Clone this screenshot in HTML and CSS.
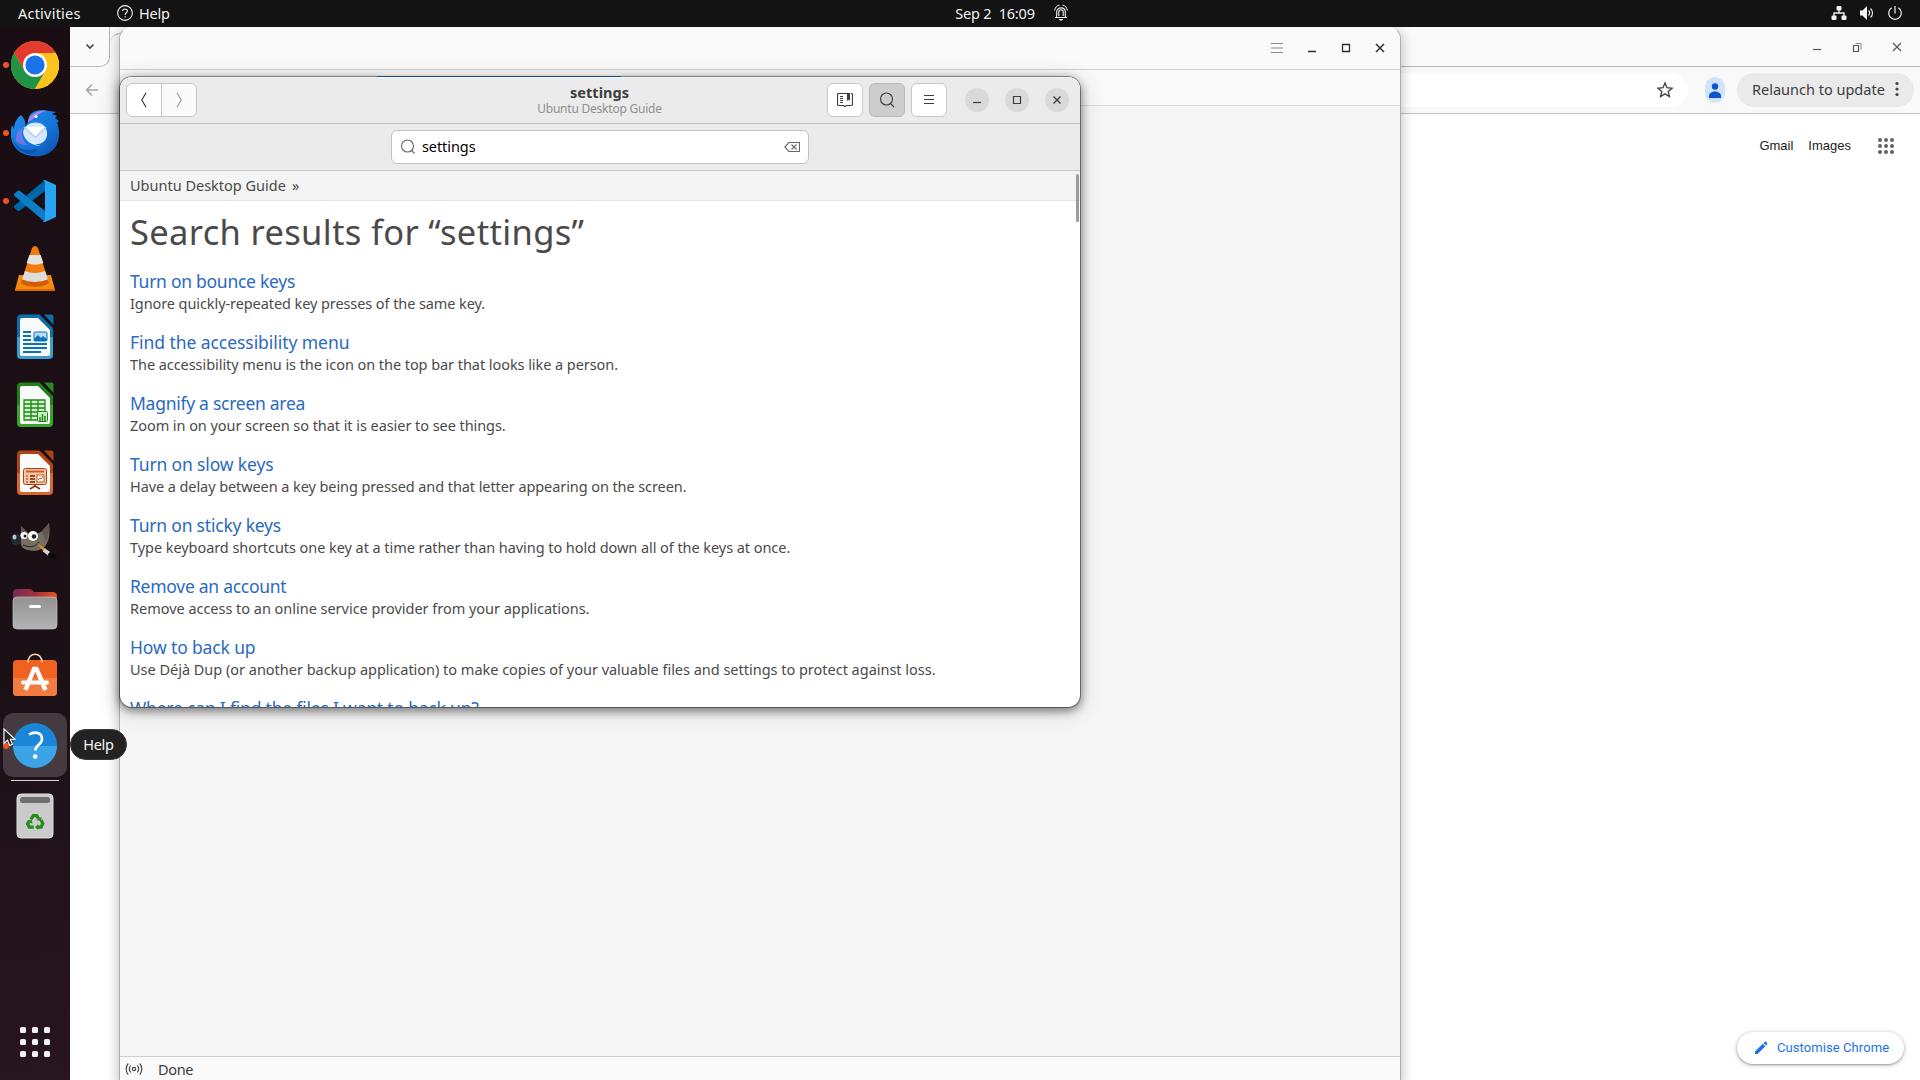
FILE: index.html
```html
<!DOCTYPE html>
<html lang="en">
<head>
<meta charset="utf-8">
<title>Help</title>
<link rel="stylesheet" href="styles.css">
</head>
<body>
<div class="screen">
  <header class="topbar">
    <div class="topbar-left">
      <span class="activities">Activities</span>
      <svg width="16" height="16" viewBox="0 0 16 16" fill="none" stroke="#f2f2f2"><circle cx="8" cy="8" r="7.4" stroke-width="1.1"/><path d="M5.7 6.1C5.7 3.3 10.4 3.3 10.4 6c0 1.8-2.3 1.8-2.3 4M8.1 11.2v1.4" stroke-width="1.1"/></svg>
      <span class="app-name">Help</span>
    </div>
    <div class="topbar-clock">
      <span class="clock">Sep 2&nbsp; 16:09</span>
      <svg width="16" height="18" viewBox="0 0 16 18" fill="none" stroke="#f2f2f2"><path d="M2 13.5h12M3.7 13V8C3.7 2.5 12.3 2.5 12.3 8v5M5.8 12V8C5.8 5 10.2 5 10.2 8v4" stroke-width="1.1"/><path d="M1.700 6.500C2 3 4.500 1.300 6.500 1.200M14.300 6.500C14 3 11.500 1.300 9.500 1.200"/><path d="M6 15h4c-.3 2.200-3.700 2.200-4 0z" fill="#f2f2f2" stroke="none"/></svg>
    </div>
    <div class="topbar-status">
      <svg width="16" height="16" viewBox="0 0 16 16" fill="#f2f2f2"><rect x="5.500" y="1" width="5" height="4.500" rx="1"/><rect x="0.500" y="10.500" width="5" height="4.500" rx="1"/><rect x="10.500" y="10.500" width="5" height="4.500" rx="1"/><path d="M8 5v3M3 11V8h10v3" fill="none" stroke="#f2f2f2" stroke-width="1.300"/></svg>
      <svg width="16" height="16" viewBox="0 0 16 16" fill="#f2f2f2"><path d="M1 5.500h2.500L8 1v14l-4.500-4.500H1z"/><path d="M9.500 5.500c1.500 1.500 1.500 3.500 0 5M11.500 3.500c2.700 2.500 2.700 6.500 0 9" fill="none" stroke="#f2f2f2" stroke-width="1.100"/></svg>
      <svg width="16" height="16" viewBox="0 0 16 16" fill="none" stroke="#f2f2f2" stroke-width="1.200"><path d="M8 1v7.500M4.600 2.800a6.300 6.300 0 1 0 6.800 0"/></svg>
    </div>
  </header>

  <nav class="dock">
    <div class="dock-item running"><svg width="48" height="48" viewBox="0 0 48 48"><circle cx="24" cy="24" r="24" fill="#fbc116"/><path d="M3.200 12A24 24 0 0 1 44.800 12L24 12 13.600 30z" fill="#e33b2e"/><path d="M3.200 12A24 24 0 0 0 24 48L34.400 30 13.600 30z" fill="#229342"/><path d="M24 48L34.400 30 24 12H44.800A24 24 0 0 1 24 48z" fill="#fcc31e"/><circle cx="24" cy="24" r="12" fill="#fff"/><circle cx="24" cy="24" r="9.600" fill="#1a73e8"/></svg></div>
    <div class="dock-item running"><svg width="48" height="48" viewBox="0 0 48 48"><defs><linearGradient id="tb" x1="0" y1="0" x2="1" y2="1"><stop offset="0" stop-color="#258ff0"/><stop offset=".6" stop-color="#1373d9"/><stop offset="1" stop-color="#0b4aa5"/></linearGradient></defs><path d="M10 6c4 4 5 8 4 12l3-5C17 5 22 1 32 1l13 2-4 2 5 2-2 2 4 3-2 2c3 6 3 16-1 23-5 8-13 11-22 10C10 47 1 38 0 28c-.5-4 0-8 1-12l2 4c0-6 3-11 7-14z" fill="url(#tb)"/><path d="M17 13c2-8 10-12 19-11-9 1-11 7-19 11z" fill="#ae8bea"/><circle cx="25" cy="7.500" r="1.500" fill="#fff"/><path d="M1 27c3 13 14 16 26 13l-4 5C10 46 2 37 1 27z" fill="#0b55b5"/><path d="M5 32c0-8 2-11 7-14-3 8 0 14 5 18-5 0-9-1-12-4z" fill="#6b78e5"/><path d="M12 23c3-12 22-13 24 0 1 9-6 13-13 12l7 2c-8 0-17-5-18-14z" fill="#d7eafd"/><path d="M13 18l10 9c1 .8 2 .8 3 0l9-9" fill="#fff" stroke="#a6c8ee" stroke-width="1.200"/></svg></div>
    <div class="dock-item running"><svg width="44" height="44" viewBox="0 0 44 44"><path d="M32 1v11L7 31.500c-1 .8-2 .7-2.600 0L1.500 29c-.7-.8-.7-1.700 0-2.500z" fill="#0065a9"/><path d="M32 43V32L7 12c-1-.8-2-.7-2.600 0l-2.900 2.600c-.7.8-.7 1.700 0 2.500z" fill="#0c7dc6"/><path d="M32 1l11 5v32l-11 5c-1 .2-2 0-2-1 1 .5 2 0 2-1.500v-37C32 2 31 1.500 30 2c.5-.8 1-1.200 2-1z" fill="#27a5f2"/></svg></div>
    <div class="dock-item raised"><svg width="42" height="48" viewBox="0 0 42 48"><path d="M5 31h32l4 15H1z" fill="#f58a10"/><path d="M1 45h40v2H1z" fill="#e06500"/><path d="M18 4q3-4 6 0l11 35q-14 8-28 0z" fill="#f27c0c"/><path d="M15.400 11h11.200l2.800 8q-8.400 3.500-16.800 0z" fill="#e4e4e4"/><path d="M11 27q10 4 20 0l3 8.500q-13 5-26 0z" fill="#ddd"/><path d="M8 35.500q13 5 26 0l1 4q-14 7-28 0z" fill="#d35d05"/></svg></div>
    <div class="dock-item"><svg width="38" height="46" viewBox="0 0 38 46"><defs><linearGradient id="wr" x2="0" y2="1"><stop offset=".5" stop-color="#0b6fa9"/><stop offset=".5" stop-color="#3a9ed1"/></linearGradient></defs><path d="M5 .5h18.500L37 14v27a4 4 0 0 1-4 4H5a4 4 0 0 1-4-4V5A4 4 0 0 1 5 .5z" fill="url(#wr)"/><path d="M4 6q0-2 2-2h16l12 12v24q0 2-2 2H6q-2 0-2-2z" fill="#fbfbfb"/><path d="M28 .5h7.500q2 0 2 2V11z" fill="#0b6fa9"/><path d="M7 18h8M7 22h8M7 26h8M7 30h24M7 34h24M7 38h18" stroke="#0a73b5" stroke-width="2"/><rect x="18" y="18" width="13" height="9" rx="1" fill="#b5defa" stroke="#0a73b5"/><path d="M18 27v-2l4-4 3 3 2-2 4 3v2z" fill="#0a73b5"/></svg></div>
    <div class="dock-item"><svg width="38" height="46" viewBox="0 0 38 46"><defs><linearGradient id="ca" x2="0" y2="1"><stop offset=".5" stop-color="#1f8315"/><stop offset=".5" stop-color="#37a726"/></linearGradient></defs><path d="M5 .5h18.500L37 14v27a4 4 0 0 1-4 4H5a4 4 0 0 1-4-4V5A4 4 0 0 1 5 .5z" fill="url(#ca)"/><path d="M4 6q0-2 2-2h16l12 12v24q0 2-2 2H6q-2 0-2-2z" fill="#fbfbfb"/><path d="M28 .5h7.500q2 0 2 2V11z" fill="#268c17"/><path d="M8 18h21v20H8zM8 22h21M8 26h21M8 30h21M8 34h21M15 18v20M22 18v20" fill="#cdf3c7" stroke="#20871a" stroke-width="1.300"/><rect x="21.500" y="29.500" width="10" height="10" rx="1" fill="#c9f2c2" stroke="#20871a"/><path d="M24 39v-4M26.500 39v-7M29 39v-5" stroke="#20871a" stroke-width="1.500"/></svg></div>
    <div class="dock-item"><svg width="38" height="46" viewBox="0 0 38 46"><defs><linearGradient id="im" x2="0" y2="1"><stop offset=".5" stop-color="#b14511"/><stop offset=".5" stop-color="#d9662f"/></linearGradient></defs><path d="M5 .5h18.500L37 14v27a4 4 0 0 1-4 4H5a4 4 0 0 1-4-4V5A4 4 0 0 1 5 .5z" fill="url(#im)"/><path d="M4 6q0-2 2-2h16l12 12v24q0 2-2 2H6q-2 0-2-2z" fill="#fbfbfb"/><path d="M28 .5h7.500q2 0 2 2V11z" fill="#ab4413"/><rect x="7.500" y="18.500" width="23" height="16" rx="2" fill="#f8c9a9" stroke="#a64212"/><path d="M10 21.500h18" stroke="#d05b20" stroke-width="2"/><path d="M10 26h2M10 29h2M10 32h2" stroke="#d05b20" stroke-width="1.500"/><path d="M14 26h5M14 29h5M14 32h5" stroke="#6b2804" stroke-width="1.600"/><rect x="21" y="25" width="7" height="7" fill="#fff" stroke="#c3561f"/><path d="M22 30l2-2 1 1 2-3" fill="none" stroke="#c3561f"/><path d="M19 35v2M19 36l-5 3M19 36l5 3" stroke="#8a3409" stroke-width="1.600"/></svg></div>
    <div class="dock-item"><svg width="48" height="40" viewBox="0 0 48 40"><path d="M10 5l7 7c5 2 12 1 15-3l6-7c1 7 1 16-3 22-3 5-12 7-18 5-6-1-8-5-7-10z" fill="#746f61"/><path d="M10 5l7 7-7 3zM38 2c0 7 0 13-3 18l-4-9z" fill="#5c584c"/><circle cx="13" cy="14.500" r="3.600" fill="#fff"/><circle cx="22" cy="15" r="5" fill="#fff"/><circle cx="14" cy="15" r="1.500" fill="#111"/><circle cx="23" cy="15.500" r="2.300" fill="#222"/><ellipse cx="5" cy="18.500" rx="4.700" ry="6" fill="#242b31"/><ellipse cx="3.500" cy="16" rx="2" ry="2.500" fill="#b9c4c8"/><path d="M12 24c6 3 12 2 16-3" fill="none" stroke="#332f2a" stroke-width="1.200"/><path d="M26 22l9 6-2 3z" fill="#e68a1f"/><path d="M34 27.500l6 4-3 3-5-4z" fill="#d8d8d8"/><path d="M39 31c4 0 6 3 7 7-5-1-8-1-9-5z" fill="#090909"/></svg></div>
    <div class="dock-item"><svg width="46" height="42" viewBox="0 0 46 42"><defs><linearGradient id="fo"><stop offset="0" stop-color="#782b57"/><stop offset=".5" stop-color="#a0303c"/><stop offset="1" stop-color="#e95420"/></linearGradient><linearGradient id="fb" x2="0" y2="1"><stop stop-color="#929292"/><stop offset="1" stop-color="#b4b4b4"/></linearGradient></defs><path d="M1 5q0-4 4-4h12q2 0 3 1l2 2h18q5 0 5 4v8H1z" fill="url(#fo)"/><rect x="1" y="9" width="44" height="32" rx="4" fill="url(#fb)" stroke="#c2c2c2" stroke-width=".7"/><rect x="17" y="17" width="12" height="3" rx="1.500" fill="#fff"/></svg></div>
    <div class="dock-item raised-more"><svg width="46" height="44" viewBox="0 0 46 44"><rect x="1" y="7" width="44" height="36" rx="4" fill="#f0621f"/><path d="M1 25h44v14a4 4 0 0 1-4 4H5a4 4 0 0 1-4-4z" fill="#f27b42"/><path d="M16 9.500C16-1.500 30-1.500 30 9.500" fill="none" stroke="#f8d5aa" stroke-width="1.600"/><path d="M13.500 37l8.500-21h2.500L33.500 37" fill="none" stroke="#fff" stroke-width="4.500"/><path d="M11 29.500h24" stroke="#fff" stroke-width="4" stroke-linecap="round"/></svg></div>
    <div class="dock-item running active"><svg width="46" height="46" viewBox="0 0 46 46"><circle cx="23" cy="23" r="22" fill="#1b86d8"/><path d="M1 24a22 22 0 0 0 44 0z" fill="#3ba4e6"/><path d="M17 12.500c6-3.500 13-2 13 4.500 0 6-6.700 5.500-6.700 11.500" fill="none" stroke="#fff" stroke-width="2.600"/><circle cx="23.200" cy="34.500" r="2.300" fill="#fff"/></svg></div>
    <div class="dock-separator"></div>
    <div class="dock-item raised"><svg width="38" height="46" viewBox="0 0 38 46"><rect x="1" y="1" width="36" height="44" rx="4" fill="#cbcbcb" stroke="#ddd"/><rect x="4" y="4" width="30" height="6" rx="2.500" fill="#6e6e6e"/><g transform="translate(3.400 5) scale(.82)"><g fill="none" stroke="#28891d" stroke-width="4"><path d="M14 26l3-4.500h4l2.500 4"/><path d="M26.500 27l2 4-2 4.500H22"/><path d="M17.500 35.500H12l-2-4 2.500-4"/></g><path d="M21 27l5.500 1 .5-5zM23 32v7l-4-3.500zM10 28l5-1.500 1 5z" fill="#28891d"/></g></svg></div>
    <div class="apps-grid"><i></i><i></i><i></i><i></i><i></i><i></i><i></i><i></i><i></i></div>
  </nav>

  <main class="desktop">
    <section class="window browser">
      <div class="tabstrip">
        <div class="tab-search"><svg width="10" height="7" viewBox="0 0 10 7" fill="none" stroke="#444" stroke-width="1.600"><path d="M1.500 1.500L5 5l3.500-3.500"/></svg></div>
        <div class="tab-edge"></div>
        <div class="browser-controls">
          <svg width="14" height="14" viewBox="0 0 14 14" stroke="#555" fill="none"><path d="M3 9.500h8" stroke-width="1.200"/></svg>
          <svg width="14" height="14" viewBox="0 0 14 14" stroke="#555" fill="none"><path d="M3.500 5.500h5v6h-5z" stroke-width="1.200"/><path d="M5.500 3.500h5.500v6" stroke="#888"/></svg>
          <svg width="14" height="14" viewBox="0 0 14 14" stroke="#555" fill="none"><path d="M3 3l8 8M11 3l-8 8" stroke-width="1.200"/></svg>
        </div>
      </div>
      <div class="toolbar">
        <svg class="back" width="14" height="14" viewBox="0 0 14 14" stroke="#a6a6a6" stroke-width="1.600" fill="none"><path d="M13 7H2M7 1.500L1.500 7 7 12.500"/></svg>
        <div class="omnibox"><svg width="18" height="18" viewBox="0 0 18 18" fill="none" stroke="#444" stroke-width="1.400"><path d="M9 2l2 4.700 5 .5-3.800 3.400 1.200 5L9 12.900l-4.400 2.700 1.200-5L2 7.200l5-.5z"/></svg></div>
        <div class="avatar"><svg width="20" height="26" viewBox="0 0 20 26" fill="#0b57d0"><circle cx="10" cy="9.500" r="3.200"/><path d="M4 21v-2c0-6 12-6 12 0v2z"/></svg></div>
        <div class="relaunch"><span>Relaunch to update</span><svg width="4" height="16" viewBox="0 0 4 16" fill="#444"><circle cx="2" cy="2.500" r="1.600"/><circle cx="2" cy="8" r="1.600"/><circle cx="2" cy="13.500" r="1.600"/></svg></div>
      </div>
      <div class="page">
        <div class="page-links"><span>Gmail</span><span>Images</span><svg width="16" height="16" viewBox="0 0 16 16" fill="#5f6368"><circle cx="2" cy="2" r="2"/><circle cx="8" cy="2" r="2"/><circle cx="14" cy="2" r="2"/><circle cx="2" cy="8" r="2"/><circle cx="8" cy="8" r="2"/><circle cx="14" cy="8" r="2"/><circle cx="2" cy="14" r="2"/><circle cx="8" cy="14" r="2"/><circle cx="14" cy="14" r="2"/></svg></div>
        <div class="customise"><svg width="14" height="14" viewBox="0 0 14 14" fill="#1a73e8"><path d="M1 10.500L8.800 2.700l2.500 2.500L3.500 13H1zM9.500 2l1.200-1.200q.6-.4 1.100 0l1.400 1.400q.4.500 0 1.100L12 4.500z"/></svg><span>Customise Chrome</span></div>
      </div>
    </section>

    <section class="window mail">
      <div class="mail-titlebar">
        <svg width="14" height="14" viewBox="0 0 14 14" stroke="#8a8a8a" fill="none"><path d="M1 2.500h12M1 7h12M1 11.500h12" stroke-width="1.100"/></svg>
        <svg width="14" height="14" viewBox="0 0 14 14" stroke="#2e2e2e" fill="none"><path d="M3 10.500h8" stroke-width="1.300"/></svg>
        <svg width="14" height="14" viewBox="0 0 14 14" stroke="#2e2e2e" fill="none"><path d="M3.500 3.500h7v7h-7z" stroke-width="1.300"/></svg>
        <svg width="14" height="14" viewBox="0 0 14 14" stroke="#2e2e2e" fill="none"><path d="M3 3l8 8M11 3l-8 8" stroke-width="1.500"/></svg>
      </div>
      <div class="mail-tabs"><div class="mail-tab"></div></div>
      <div class="mail-body"></div>
      <div class="mail-status"><svg width="18" height="14" viewBox="0 0 18 14" fill="none" stroke="#4a4a4a" stroke-width="1.200"><circle cx="9" cy="7" r="1.700"/><path d="M5.700 3.500c-1.600 2-1.600 5 0 7M12.300 3.500c1.600 2 1.600 5 0 7M3.200 1.500c-2.700 3.200-2.700 7.800 0 11M14.800 1.500c2.700 3.200 2.700 7.800 0 11"/></svg><span>Done</span></div>
    </section>

    <section class="window help">
      <div class="headerbar">
        <div class="nav-buttons">
          <div class="nav-button"><svg width="16" height="16" viewBox="0 0 16 16" fill="none" stroke="#3d3d3d" stroke-width="1.200"><path d="M10 .8L5.800 8l4.200 7.200"/></svg></div>
          <div class="nav-button disabled"><svg width="16" height="16" viewBox="0 0 16 16" fill="none" stroke="#9b9b9b" stroke-width="1.200"><path d="M6 .8L10.200 8 6 15.200"/></svg></div>
        </div>
        <div class="titles"><div class="title">settings</div><div class="subtitle">Ubuntu Desktop Guide</div></div>
        <div class="actions">
          <div class="button"><svg width="16" height="16" viewBox="0 0 16 16" fill="none" stroke="#3d3d3d"><path d="M10 1.500H1.500q-1 0-1 1V12q0 1.500 1.500 1.500h4.500l1.500 1 1.500-1H14q1.500 0 1.500-1.500V2.500q0-1-1-1H14" stroke-width="1.200"/><path d="M3 4.500h3M3 6.500h3M3 8.500h3M3 10.500h3"/><path d="M10 1h3v8l-1.500-1.500L10 9z" fill="#3d3d3d" stroke="none"/></svg></div>
          <div class="button pressed"><svg width="16" height="16" viewBox="0 0 16 16" fill="none" stroke="#3d3d3d" stroke-width="1.100"><circle cx="7.500" cy="7" r="6"/><path d="M11.500 11.500l3.500 3.500"/></svg></div>
          <div class="button"><svg width="16" height="16" viewBox="0 0 16 16" fill="none" stroke="#3d3d3d"><path d="M3 3.500h10M3 7.500h10M3 11.500h10" stroke-width="1.100"/></svg></div>
        </div>
        <div class="controls">
          <div class="control"><svg width="16" height="16" viewBox="0 0 16 16" stroke="#3d3d3d" fill="none"><path d="M4 10.500h8" stroke-width="1.200"/></svg></div>
          <div class="control"><svg width="16" height="16" viewBox="0 0 16 16" stroke="#3d3d3d" fill="none"><path d="M4.500 4.500h7v7h-7z" stroke-width="1.200"/></svg></div>
          <div class="control"><svg width="16" height="16" viewBox="0 0 16 16" stroke="#3d3d3d" fill="none"><path d="M4.500 4.500l7 7M11.500 4.500l-7 7" stroke-width="1.400"/></svg></div>
        </div>
      </div>
      <div class="searchbar">
        <div class="entry"><svg width="16" height="16" viewBox="0 0 16 16" fill="none" stroke="#666" stroke-width="1.100"><circle cx="7.500" cy="7" r="6"/><path d="M11.500 11.500l3 3"/></svg><span>settings</span><svg width="16" height="16" viewBox="0 0 16 16" fill="none" stroke="#666" stroke-width="1.100"><path d="M15.500 3.500v9H5L.8 8 5 3.500zM7.500 5.500l5 5M12.500 5.500l-5 5"/></svg></div>
      </div>
      <div class="breadcrumb"><span>Ubuntu Desktop Guide</span><span>»</span></div>
      <div class="content">
        <h1>Search results for “settings”</h1>
        <div class="result"><a>Turn on bounce keys</a><p>Ignore quickly-repeated key presses of the same key.</p></div>
        <div class="result"><a>Find the accessibility menu</a><p>The accessibility menu is the icon on the top bar that looks like a person.</p></div>
        <div class="result"><a>Magnify a screen area</a><p>Zoom in on your screen so that it is easier to see things.</p></div>
        <div class="result"><a>Turn on slow keys</a><p>Have a delay between a key being pressed and that letter appearing on the screen.</p></div>
        <div class="result"><a>Turn on sticky keys</a><p>Type keyboard shortcuts one key at a time rather than having to hold down all of the keys at once.</p></div>
        <div class="result"><a>Remove an account</a><p>Remove access to an online service provider from your applications.</p></div>
        <div class="result"><a>How to back up</a><p>Use Déjà Dup (or another backup application) to make copies of your valuable files and settings to protect against loss.</p></div>
        <div class="result"><a>Where can I find the files I want to back up?</a></div>
      </div>
      <div class="scrollbar"></div>
    </section>
  </main>

  <div class="tooltip">Help</div>
  <svg class="cursor" width="14" height="20" viewBox="0 0 14 20"><path d="M1 1v14.500l3.500-3.300 2.200 5.300 2.800-1.200-2.200-5H12z" fill="#222" stroke="#fff" stroke-width="1.100"/></svg>
</div>
</body>
</html>
```

FILE: styles.css
```css
* { box-sizing: border-box; margin: 0; padding: 0; }

body {
  width: 1920px;
  height: 1080px;
  overflow: hidden;
  font-family: "Noto Sans", "Open Sans", sans-serif;
  font-size: 14.5px;
  color: #3d3d3d;
}

svg { display: block; flex: none; }

.screen {
  position: relative;
  display: grid;
  grid-template: 27px 1053px / 70px 1850px;
  width: 1920px;
  height: 1080px;
  background: #fff;
}

/* Top panel */
.topbar {
  grid-column: 1 / 3;
  display: grid;
  grid-template-columns: 1fr auto 1fr;
  align-items: center;
  background: #131313;
  color: #f2f2f2;
  line-height: 24px;
  padding-bottom: 2px;
  z-index: 2;
}
.topbar-left { display: flex; align-items: center; padding-left: 18px; }
.activities { letter-spacing: .22px; width: 99px; }
.app-name { margin-left: 6px; letter-spacing: -.25px; }
.topbar-clock { display: flex; align-items: center; gap: 18px; padding-right: 2px; margin-left: 106px; }
.clock { letter-spacing: -.17px; }
.topbar-status { display: flex; justify-content: flex-end; gap: 12px; padding-right: 17px; }

/* Dock */
.dock {
  display: flex;
  flex-direction: column;
  padding-top: 4px;
  background: linear-gradient(170deg, #1a0e14, #1c1017 60%, #27151f);
}
.dock-item {
  position: relative;
  display: flex;
  align-items: center;
  justify-content: center;
  flex: none;
  height: 68px;
}
.raised { padding-bottom: 2px; }
.raised-more { padding-bottom: 5px; }
.running::before {
  content: "";
  position: absolute;
  left: 3px;
  top: 31px;
  width: 6px;
  height: 6px;
  border-radius: 50%;
  background: #e95420;
}
.active { height: 64px; margin: 2px 3px; border-radius: 10px; background: #453a40; }
.active::before { left: 0; top: 30px; }
.dock-separator { flex: none; height: 1px; margin: 1px 11px 2px; background: #d8d4d6; }
.apps-grid {
  display: grid;
  grid-template-columns: repeat(3, 6px);
  grid-auto-rows: 6px;
  gap: 6px;
  margin: auto 20px 23px;
}
.apps-grid i { background: #f2f2f2; border-radius: 1.5px; }

/* Windows */
.desktop { position: relative; overflow: hidden; }
.window { position: absolute; display: flex; flex-direction: column; }

.browser { inset: 0; background: #fff; }
.tabstrip { display: flex; height: 40px; background: #fafafa; }
.tab-search {
  width: 40px;
  display: flex;
  align-items: center;
  justify-content: center;
  border-bottom: 1px solid #bdbdbd;
  border-right: 1px solid #b5b5b5;
  border-radius: 0 0 10px 0;
}
.tab-edge { width: 12px; margin: 6px 0 12px; border-top: 1px solid #b5b5b5; border-radius: 10px 0 0 0; }
.browser-controls {
  flex: 1;
  display: flex;
  justify-content: flex-end;
  align-items: center;
  gap: 26px;
  padding-right: 16px;
  border-bottom: 1px solid #b5b5b5;
}
.toolbar {
  display: flex;
  align-items: center;
  height: 47px;
  padding-right: 6px;
  background: #f9f9fa;
  border-bottom: 1px solid #c4c4c4;
}
.back { margin-left: 15px; }
.omnibox {
  flex: 1;
  display: flex;
  align-items: center;
  justify-content: flex-end;
  height: 34px;
  margin-left: 60px;
  padding-right: 14px;
  border-radius: 17px;
  background: #fff;
}
.avatar { margin: 0 12px 0 17px; width: 20px; height: 26px; border-radius: 13px; background: #d3e3fd; }
.relaunch {
  display: flex;
  align-items: center;
  justify-content: space-between;
  width: 177px;
  height: 34px;
  padding: 0 15px 2px 15px;
  border-radius: 17px;
  background: #eaeaea;
}
.page { flex: 1; display: flex; flex-direction: column; justify-content: space-between; align-items: flex-end; }
.page-links {
  display: flex;
  align-items: center;
  gap: 15px;
  padding: 22px 26px 0 0;
  font: 13px/20px "Liberation Sans", Arial, sans-serif;
  color: #222;
}
.page-links svg { margin-left: 12px; }
.customise {
  display: flex;
  align-items: center;
  gap: 9px;
  width: 167px;
  height: 32px;
  margin: 0 16px 16px 0;
  padding: 0 0 1px 17px;
  border-radius: 16px;
  background: #fff;
  box-shadow: 0 1px 2px rgba(60, 64, 67, .4), 0 1px 4px 1px rgba(60, 64, 67, .2);
  font: 13px Roboto, sans-serif;
  letter-spacing: .08px;
  color: #1a73e8;
}

.mail {
  left: 49px;
  top: 0;
  width: 1282px;
  height: 1060px;
  border: 1px solid #aeaeae;
  border-top-color: #f5f5f5;
  border-radius: 12px 12px 0 0;
  background: #f6f6f6;
  box-shadow: 0 2px 14px rgba(0, 0, 0, .28);
  overflow: hidden;
}
.mail-titlebar {
  display: flex;
  align-items: center;
  justify-content: flex-end;
  gap: 20px;
  height: 42px;
  padding: 0 13px 2px 0;
  background: #fafafa;
  border-bottom: 1px solid #cfcfcf;
}
.mail-titlebar svg:first-child { margin-right: 1px; }
.mail-tabs { height: 36px; background: #f9f9fa; border-bottom: 1px solid #dcdcdc; padding: 3px 0 0 256px; }
.mail-tab { width: 246px; height: 32px; background: #fff; border-radius: 4px; }
.mail-body { height: 950px; background: #f6f6f6; }
.mail-status {
  display: flex;
  align-items: center;
  gap: 15px;
  height: 27px;
  padding: 0 6px 2px 5px;
  border-top: 1px solid #d0d0d0;
  background: #fafafa;
  letter-spacing: -.35px;
}

/* Help viewer */
.help {
  left: 50px;
  top: 50px;
  width: 960px;
  height: 630px;
  border-radius: 12px;
  background: #fff;
  box-shadow: 0 0 0 1px rgba(0, 0, 0, .38), 0 3px 10px 1px rgba(0, 0, 0, .45), 0 3px 24px rgba(0, 0, 0, .18);
}
.help::before {
  content: "";
  position: absolute;
  left: 257px;
  top: -1px;
  width: 244px;
  height: 1px;
  background: #0f4c8f;
}
.headerbar {
  display: grid;
  grid-template-columns: 1fr auto 1fr auto;
  align-items: center;
  height: 47px;
  padding: 0 11px 0 6px;
  border-bottom: 1px solid #bfbfbf;
  border-radius: 12px 12px 0 0;
  background: #ebebeb;
  box-shadow: inset 0 1px #f8f8f8;
}
.nav-buttons {
  display: flex;
  width: 71px;
  height: 34px;
  border: 1px solid #c6c6c6;
  border-radius: 6px;
  background: #fff;
  overflow: hidden;
}
.nav-button { flex: 1; display: flex; align-items: center; justify-content: center; }
.disabled { border-left: 1px solid #cacaca; background: #fafafa; }
.titles { text-align: center; padding-bottom: 1px; margin-left: 108px; }
.title { font-size: 14.5px; line-height: 17px; font-weight: 700; letter-spacing: .05px; }
.subtitle { font-size: 12px; line-height: 15px; letter-spacing: -.22px; color: #8f8f8f; }
.actions { display: flex; justify-content: flex-end; gap: 6px; margin-right: 18px; }
.button {
  display: flex;
  align-items: center;
  justify-content: center;
  width: 36px;
  height: 34px;
  border: 1px solid #c8c8c8;
  border-radius: 6px;
  background: #fff;
}
.pressed { background: #cdcdcd; border-color: #b8b8b8; }
.controls { display: flex; gap: 16px; }
.control {
  display: flex;
  align-items: center;
  justify-content: center;
  width: 24px;
  height: 24px;
  border-radius: 50%;
  background: #d9d9d9;
}
.searchbar {
  display: flex;
  align-items: center;
  justify-content: center;
  height: 47px;
  border-bottom: 1px solid #c6c6c6;
  background: #ebebeb;
}
.entry {
  display: flex;
  align-items: center;
  width: 418px;
  height: 34px;
  padding: 0 8px;
  border: 1px solid #c4c4c4;
  border-radius: 6px;
  background: #fff;
  color: #000;
}
.entry span { flex: 1; margin-left: 6px; padding-bottom: 2px; letter-spacing: -.08px; }
.breadcrumb {
  display: flex;
  gap: 6px;
  height: 30px;
  padding: 0 10px;
  border-bottom: 1px solid #e4e4e4;
  background: #f4f4f4;
  line-height: 29px;
  color: #4a4a4a;
}
.content { flex: 1; min-height: 0; overflow: hidden; padding: 7px 10px 0; border-radius: 0 0 12px 12px; }
h1 {
  height: 61px;
  font-size: 34.5px;
  font-weight: 400;
  line-height: 48px;
  letter-spacing: .34px;
  color: #4a4a4a;
}
.result { height: 61px; white-space: nowrap; }
.result a { display: block; height: 25px; font-size: 17.5px; line-height: 24px; letter-spacing: -.2px; color: #2a6ac0; }
.result p { line-height: 18px; letter-spacing: -.06px; color: #4a4a4a; }
.result:nth-of-type(1) a, .result:nth-of-type(3) a, .result:nth-of-type(6) a { letter-spacing: -.27px; }
.result:nth-of-type(2) a { letter-spacing: -.06px; }
.result:nth-of-type(4) a, .result:nth-of-type(7) a { letter-spacing: -.14px; }
.result:nth-of-type(1) p, .result:nth-of-type(4) p { letter-spacing: -.085px; }
.result:nth-of-type(6) p { letter-spacing: -.025px; }
.result:nth-of-type(7) p { letter-spacing: -.015px; }
.scrollbar { position: absolute; right: 1px; top: 97px; width: 3px; height: 48px; border-radius: 2px; background: #9b9b9b; }

/* Overlays */
.tooltip {
  position: absolute;
  left: 70px;
  top: 729px;
  width: 57px;
  height: 31px;
  border-radius: 16px;
  border: 1px solid #383838;
  background: #222;
  color: #f5f5f5;
  line-height: 29px;
  text-align: center;
  letter-spacing: -.3px;
}
.cursor { position: absolute; left: 3px; top: 728px; }
```
